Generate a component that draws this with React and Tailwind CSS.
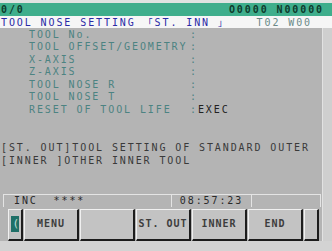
import React from "react";

const labels = [
  ["TOOL No.", ""],
  ["TOOL OFFSET/GEOMETRY", ""],
  ["X-AXIS", ""],
  ["Z-AXIS", ""],
  ["TOOL NOSE R", ""],
  ["TOOL NOSE T", ""],
  ["RESET OF TOOL LIFE", "EXEC"],
];

const SoftKey = ({ label, small, children }) => (
  <div
    className={`${
      small ? "w-[15px]" : "w-[55px]"
    } h-[32px] bg-[#c3c3c3] border-t border-l border-[#f0f0f0] border-r-2 border-b-2 border-r-[#1c1c1c] border-b-[#1c1c1c] flex items-center justify-center font-bold text-[#3d3d3d] tracking-[1px] whitespace-pre`}
  >
    {label}
    {children}
  </div>
);

export default function App() {
  return (
    <div className="w-[332px] h-[251px] overflow-hidden flex flex-col bg-[#d3d3d3] font-['DejaVu_Sans_Mono',monospace] text-[10px] tracking-[1.9px]">
      <div className="h-[3px] bg-[#dfe3e1]" />
      {/* top status bar */}
      <div className="h-[13px] bg-[#3fae8c] flex justify-between px-[1px] pt-[2px] leading-[10px] text-[#0e3b2c] font-bold">
        <span>0/0</span>
        <span className="mr-[7px]">O0000 N00000</span>
      </div>
      {/* title row */}
      <div className="h-[12px] bg-[#f6f6f6] flex items-end leading-[11px] whitespace-pre">
        <span className="text-[#2a2aa6] pl-[1px]">
          TOOL NOSE SETTING{" "}
          <span className="inline-block w-[11px] font-['Noto_Sans_CJK_JP',sans-serif] text-[9px] tracking-normal">「</span>
          ST. INN{" "}
          <span className="inline-block w-[8px] font-['Noto_Sans_CJK_JP',sans-serif] text-[9px] tracking-normal">」</span>
        </span>
        <span className="ml-auto mr-[20px] text-[#6b8a88]">T02 W00</span>
      </div>

      <div className="flex">
        <div className="w-[322px] h-[213px] bg-[#b4b4b4] flex flex-col">
          <div className="pt-[0.5px] leading-[12.6px] text-[#4c8382] whitespace-pre">
            {labels.map(([name, value]) => (
              <div key={name} className="flex">
                <span className="w-[190px] pl-[29px]">{name}</span>
                <span>:</span>
                <span className="text-[#222]">{value}</span>
              </div>
            ))}
          </div>

          <div className="mt-[24px] leading-[13px] text-[#3a3a3a] whitespace-pre pl-[1px]">
            <div>[ST. OUT]TOOL SETTING OF STANDARD OUTER</div>
            <div>[INNER ]OTHER INNER TOOL</div>
          </div>

          {/* status line */}
          <div className="mt-[27px] ml-[3px] w-[318px] h-[13px] flex border-t border-[#e4e4e4] leading-[12px] text-[#2a2a2a] whitespace-pre">
            <div className="w-[168px] border-l border-[#e4e4e4] pl-[10px]">
              INC  ****
            </div>
            <div className="w-[80px] border-l border-[#e4e4e4] text-center">
              08:57:23
            </div>
            <div className="flex-1 border-l border-r border-[#e4e4e4]" />
          </div>

          {/* soft keys */}
          <div className="h-[34px] flex items-start pt-[2px] pl-[8px] gap-[1px] leading-[10px]">
            <SoftKey small>
              <div className="w-[8px] h-[16px] bg-[#1f6f67] flex items-center justify-end text-[#bfe0da] text-[11px] tracking-normal font-normal">
                (
              </div>
            </SoftKey>
            <SoftKey label="MENU" />
            <SoftKey label="" />
            <SoftKey label="ST. OUT" />
            <SoftKey label="INNER" />
            <SoftKey label="END" />
            <SoftKey small />
          </div>
        </div>
        <div className="flex-1 bg-[#cfcfcf] border-l border-[#e2e2e2]" />
      </div>
    </div>
  );
}
